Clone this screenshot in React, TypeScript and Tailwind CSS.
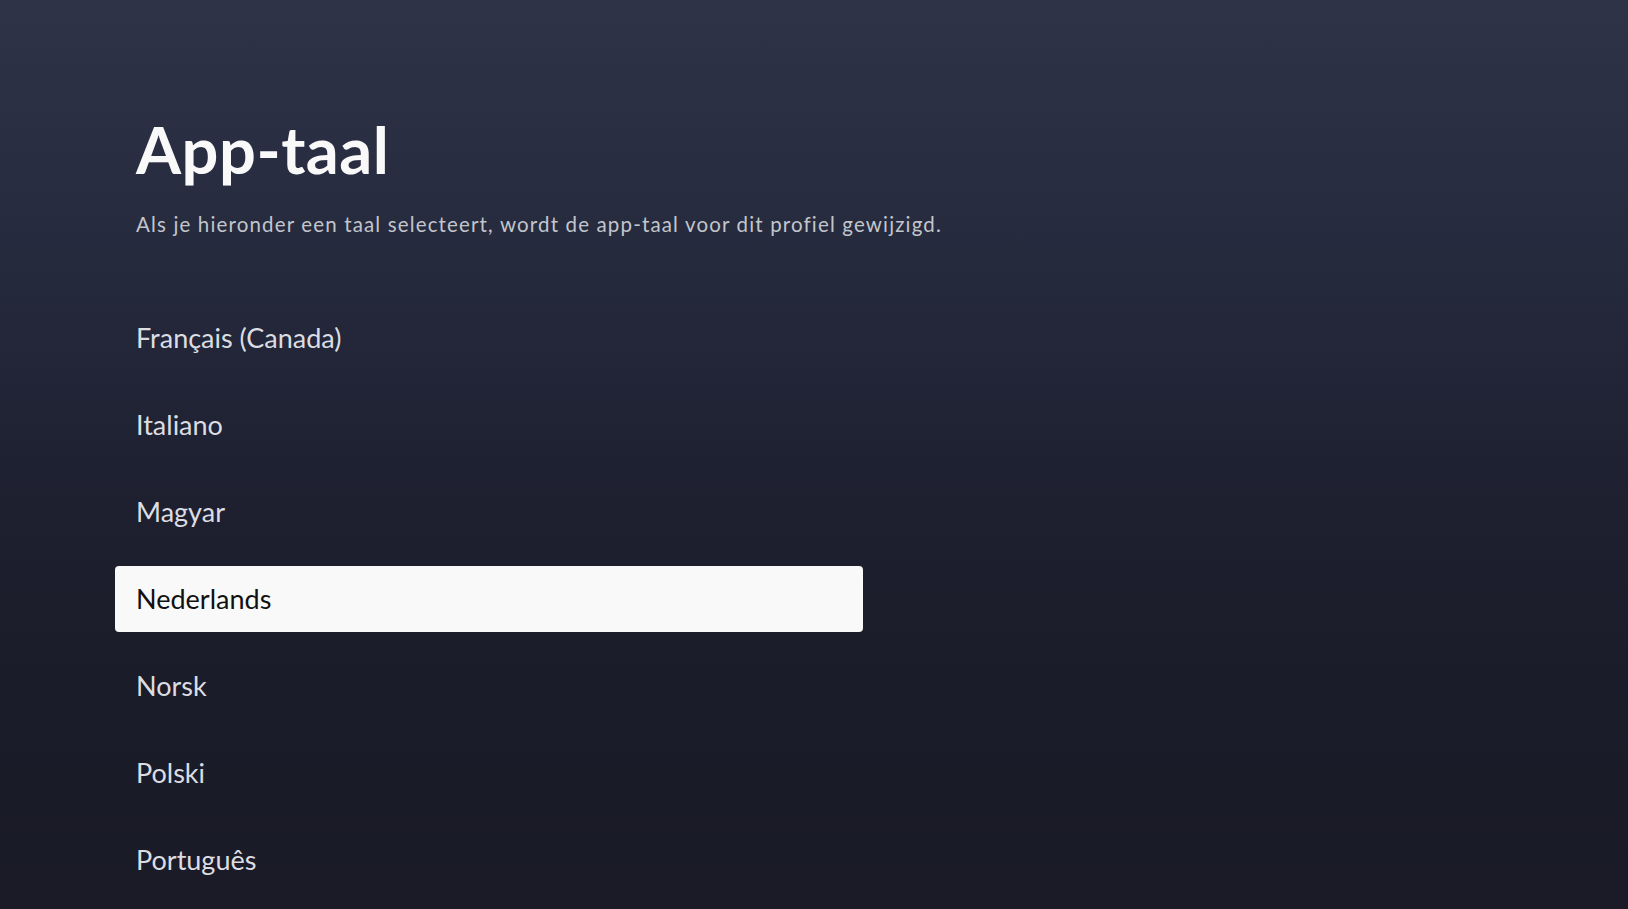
import React from 'react'

const languages = [
  'Français (Canada)',
  'Italiano',
  'Magyar',
  'Nederlands',
  'Norsk',
  'Polski',
  'Português',
]

const selected = 'Nederlands'

export default function App() {
  return (
    <div
      className="h-[909px] w-full overflow-hidden bg-[linear-gradient(180deg,#2e3348_0%,#252a3d_28%,#1e2030_55%,#1b1c29_75%,#1a1b27_100%)] font-['Lato','Liberation_Sans',sans-serif]"
    >
      <div className="px-[115px] pt-[117px]">
        <div className="pl-[21px]">
          <h1 className="text-[65px] leading-none font-bold text-[#f9f9f9] tracking-[0.5px]">
            App-taal
          </h1>
          <p className="mt-[28px] text-[20.5px] leading-[28px] text-[#c3c5cc] tracking-[1.15px]">
            Als je hieronder een taal selecteert, wordt de app-taal voor dit profiel gewijzigd.
          </p>
        </div>

        <ul className="mt-[67px] flex flex-col gap-[21px] w-[748px]">
          {languages.map((lang) => {
            const active = lang === selected
            return (
              <li
                key={lang}
                className={
                  active
                    ? 'h-[66px] rounded-[4px] bg-[#f9f9f9] px-[21px] pt-[19px] text-[27px] leading-none text-[#111111]'
                    : 'h-[66px] rounded-[4px] px-[21px] pt-[19px] text-[27px] leading-none text-[#dcdde2]'
                }
              >
                {lang}
              </li>
            )
          })}
        </ul>
      </div>
    </div>
  )
}
